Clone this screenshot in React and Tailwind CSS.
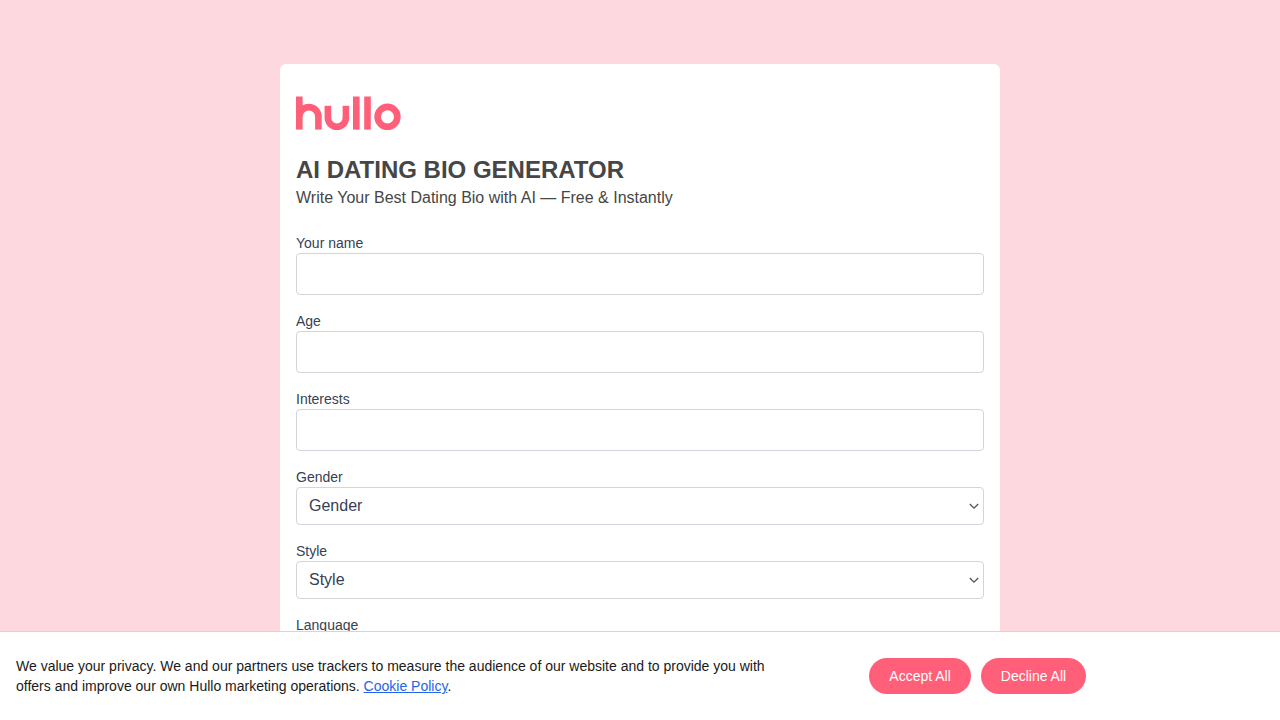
const textFields = [
  { id: "name", label: "Your name" },
  { id: "age", label: "Age" },
  { id: "interests", label: "Interests" },
];

const selectFields = [
  { id: "gender", label: "Gender" },
  { id: "style", label: "Style" },
  { id: "language", label: "Language" },
];

function Logo() {
  return (
    <svg
      className="block h-[34px] w-[105px]"
      viewBox="0 0 105 34"
      fill="none"
      stroke="#ff5f78"
      strokeWidth="6.6"
      role="img"
      aria-label="hullo"
    >
      <line x1="3.3" y1="0.5" x2="3.3" y2="33.6" />
      <circle cx="12.9" cy="20.6" r="9.5" pathLength="2" strokeDasharray="1 1" transform="rotate(180 12.9 20.6)" />
      <line x1="22.4" y1="19.4" x2="22.4" y2="33.6" />

      <line x1="31.9" y1="9.8" x2="31.9" y2="22.6" />
      <circle cx="40.9" cy="21.7" r="9" pathLength="2" strokeDasharray="1 1" />
      <line x1="49.9" y1="9.8" x2="49.9" y2="22.6" />

      <line x1="60.3" y1="0.5" x2="60.3" y2="33.6" />
      <line x1="71.5" y1="0.5" x2="71.5" y2="33.6" />

      <circle cx="91.5" cy="20.8" r="9.9" />
    </svg>
  );
}

export default function App() {
  return (
    <div className="min-h-screen bg-[#fdd9df] pt-16 pb-32 font-['Liberation_Sans',Arial,sans-serif]">
      <main className="mx-auto w-full max-w-[720px] rounded-md bg-white px-4 py-8">
        <Logo />

        <h1 className="mt-6 text-2xl font-bold text-[#464646]">AI DATING BIO GENERATOR</h1>
        <p className="text-base text-[#464646]">
          Write Your Best Dating Bio with AI — Free &amp; Instantly
        </p>

        <form className="mt-[23px] flex flex-col gap-4">
          {textFields.map((field) => (
            <div key={field.id}>
              <label htmlFor={field.id} className="block text-sm text-gray-700">
                {field.label}
              </label>
              <input
                id={field.id}
                type="text"
                className="block w-full rounded border border-gray-300 px-3 py-2 text-base text-gray-700"
              />
            </div>
          ))}

          {selectFields.map((field) => (
            <div key={field.id}>
              <label htmlFor={field.id} className="block text-sm text-gray-700">
                {field.label}
              </label>
              <div className="relative">
                <select
                  id={field.id}
                  className="block h-[38px] w-full appearance-none rounded border border-gray-300 bg-white px-3 text-base text-gray-700"
                >
                  <option>{field.label}</option>
                </select>
                <svg
                  className="pointer-events-none absolute top-1/2 right-1 h-3 w-3 -translate-y-1/2"
                  viewBox="0 0 12 12"
                  fill="none"
                  stroke="#4b5563"
                  strokeWidth="1.3"
                  aria-hidden="true"
                >
                  <path d="M1.8 4 6 8.2 10.2 4" />
                </svg>
              </div>
            </div>
          ))}
        </form>
      </main>

      {/* Cookie banner */}
      <div className="fixed inset-x-0 bottom-0 flex items-center border-t border-gray-300 bg-white py-6">
        <div className="w-2/3 px-4">
          <p className="max-w-3xl text-sm text-[#1a1a1a]">
            We value your privacy. We and our partners use trackers to measure the audience of our website and to
            provide you with offers and improve our own Hullo marketing operations.{" "}
            <a href="#cookies" className="text-[#2563eb] underline">
              Cookie Policy
            </a>
            .
          </p>
        </div>
        <div className="flex w-1/3 gap-2.5 px-4">
          <button type="button" className="rounded-full bg-[#ff5f78] px-5 py-2 text-sm text-white">
            Accept All
          </button>
          <button type="button" className="rounded-full bg-[#ff5f78] px-5 py-2 text-sm text-white">
            Decline All
          </button>
        </div>
      </div>
    </div>
  );
}
